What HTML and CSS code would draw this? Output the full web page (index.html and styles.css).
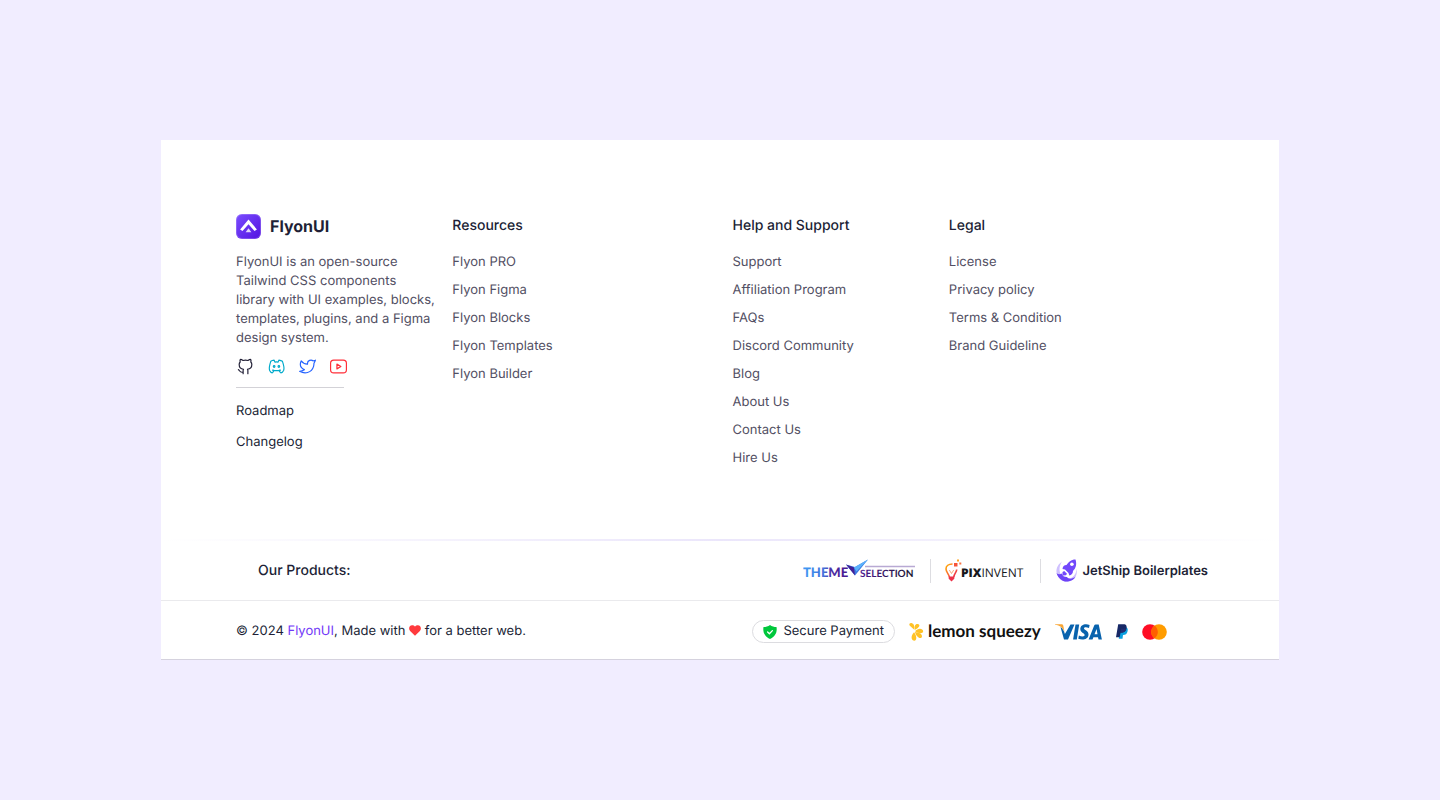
FILE: index.html
```html
<!DOCTYPE html>
<html lang="en">
<head>
<meta charset="utf-8">
<meta name="viewport" content="width=device-width, initial-scale=1">
<title>FlyonUI</title>
<link rel="stylesheet" href="styles.css">
</head>
<body>
<footer class="footer">
  <div class="footer-main">
    <section class="about">
      <a class="brand" href="#">
        <svg class="brand-mark" viewBox="0 0 25 25" aria-hidden="true">
          <defs><linearGradient id="bg" x1="0" y1="0" x2="1" y2="1"><stop offset="0" stop-color="#7a4dff"/><stop offset="1" stop-color="#5312e0"/></linearGradient></defs>
          <rect width="25" height="25" rx="6" fill="url(#bg)"/>
          <rect x=".5" y=".5" width="24" height="24" rx="5.5" fill="none" stroke="#fff" stroke-opacity=".2"/>
          <path d="M12.500 5.400 20.900 15.400 18.500 17 12.500 10.200 6.500 17 4.100 15.400Z" fill="#fff"/>
          <path d="M12.500 14.300 15.400 18.200H9.600Z" fill="#fff" fill-opacity=".8"/>
        </svg>
        <span>FlyonUI</span>
      </a>
      <p class="about-text">FlyonUI is an open-source Tailwind CSS components library with UI examples, blocks, templates, plugins, and a Figma design system.</p>
      <div class="social">
        <a class="github" href="#" aria-label="GitHub"><svg class="icon" viewBox="0 0 24 24"><path d="M9 19c-4.300 1.400-4.300-2.500-6-3m12 5v-3.500c0-1 .1-1.400-.5-2 2.800-.3 5.500-1.400 5.500-6a4.600 4.600 0 0 0-1.300-3.200 4.200 4.200 0 0 0-.1-3.200s-1.100-.3-3.500 1.300a12.300 12.300 0 0 0-6.200 0C6.500 2.800 5.400 3.100 5.400 3.100a4.200 4.200 0 0 0-.1 3.200A4.600 4.600 0 0 0 4 9.500c0 4.600 2.700 5.700 5.500 6-.6.6-.6 1.200-.5 2V21"/></svg></a>
        <a class="discord" href="#" aria-label="Discord"><svg class="icon" viewBox="0 0 24 24"><path d="M8 12a1 1 0 1 0 2 0 1 1 0 0 0-2 0m6 0a1 1 0 1 0 2 0 1 1 0 0 0-2 0M8.500 17c0 1-1.356 3-1.832 3-1.429 0-2.698-1.667-3.333-3-.635-1.667-.476-5.833 1.428-11.500C6.151 4.485 7.545 4.160 9 4l1 2.500q2-.5 4 0L15 4c1.500.160 3.043.485 4.500 1.500 2 5.667 2.167 9.833 1.500 11.500-.667 1.333-2 3-3.500 3-.5 0-2-2-2-3M7 16.500c3.500 1 6.500 1 10 0"/></svg></a>
        <a class="twitter" href="#" aria-label="Twitter"><svg class="icon" viewBox="0 0 24 24"><path d="M22 4.010c-1 .49-1.980.689-3 .99-1.121-1.265-2.783-1.335-4.380-.737S11.977 6.323 12 8v1c-3.245.083-6.135-1.395-8-4 0 0-4.182 7.433 4 11-1.872 1.247-3.739 2.088-6 2 3.308 1.803 6.913 2.423 10.034 1.517 3.580-1.040 6.522-3.723 7.651-7.742a13.840 13.840 0 0 0 .497-3.753C20.180 7.773 21.692 5.250 22 4.009z"/></svg></a>
        <a class="youtube" href="#" aria-label="YouTube"><svg class="icon" viewBox="0 0 24 24"><path d="M2 8a4 4 0 0 1 4-4h12a4 4 0 0 1 4 4v8a4 4 0 0 1-4 4H6a4 4 0 0 1-4-4zM10 9l5 3-5 3z"/></svg></a>
      </div>
      <nav class="quick" aria-label="Updates">
        <a href="#">Roadmap</a>
        <a href="#">Changelog</a>
      </nav>
    </section>
    <nav class="column" aria-labelledby="h-resources">
      <h2 id="h-resources">Resources</h2>
      <ul>
        <li><a href="#">Flyon PRO</a></li>
        <li><a href="#">Flyon Figma</a></li>
        <li><a href="#">Flyon Blocks</a></li>
        <li><a href="#">Flyon Templates</a></li>
        <li><a href="#">Flyon Builder</a></li>
      </ul>
    </nav>
    <nav class="column" aria-labelledby="h-help">
      <h2 id="h-help">Help and Support</h2>
      <ul>
        <li><a href="#">Support</a></li>
        <li><a href="#">Affiliation Program</a></li>
        <li><a href="#">FAQs</a></li>
        <li><a href="#">Discord Community</a></li>
        <li><a href="#">Blog</a></li>
        <li><a href="#">About Us</a></li>
        <li><a href="#">Contact Us</a></li>
        <li><a href="#">Hire Us</a></li>
      </ul>
    </nav>
    <nav class="column" aria-labelledby="h-legal">
      <h2 id="h-legal">Legal</h2>
      <ul>
        <li><a href="#">License</a></li>
        <li><a href="#">Privacy policy</a></li>
        <li><a href="#">Terms &amp; Condition</a></li>
        <li><a href="#">Brand Guideline</a></li>
      </ul>
    </nav>
  </div>

  <div class="fade-line"></div>
  <div class="products">
    <h2>Our Products:</h2>
    <div class="product-list">
      <a href="#" aria-label="ThemeSelection">
        <svg class="theme-logo" viewBox="0 0 113 24">
          <defs>
            <linearGradient id="th" x1="0" x2="1"><stop offset="0" stop-color="#3f9cf5"/><stop offset=".45" stop-color="#4473dc"/><stop offset=".62" stop-color="#4b2fa4"/><stop offset="1" stop-color="#49168f"/></linearGradient>
            <linearGradient id="se" x1="0" x2="1"><stop offset="0" stop-color="#4d1a91"/><stop offset="1" stop-color="#1c1231"/></linearGradient>
          </defs>
          <text class="theme-word" x="0" y="18" fill="url(#th)">THEME</text>
          <path d="M62 7.500H112" stroke="#b8a9d3" stroke-width="1.500"/>
          <path d="M43 5.500 52 8 65 .5 52 16.500Z" fill="#3a78e2"/>
          <path d="M43 5.500 51 8.500 52 16.500Z" fill="#432096"/>
          <path d="M51 8.500 65 .5 53.500 12.500Z" fill="#5bb2fc"/>
          <text class="selection-word" x="57" y="18" fill="url(#se)">SELECTION</text>
        </svg>
      </a>
      <a href="#" aria-label="Pixinvent">
        <svg class="pix-logo" viewBox="0 0 81 24">
          <defs><linearGradient id="bu" x1="0" y1="0" x2="1" y2="1"><stop offset="0" stop-color="#ffb000"/><stop offset=".5" stop-color="#fb6b32"/><stop offset="1" stop-color="#e9204f"/></linearGradient></defs>
          <path d="M7.500 5C3.500 5 1 7 1 10c0 3 2.600 4.500 3.400 8M11.700 10.500C11.700 13 9.400 14.500 8.700 18" fill="none" stroke="url(#bu)" stroke-width="1.600"/>
          <path d="M4.300 11 6.500 14.500 8.700 11" fill="none" stroke="#f98a4a" stroke-width=".7"/>
          <path d="M3.700 17.500H9.300V19.800L6.500 22.500 3.700 19.800Z" fill="#ec3148"/>
          <path d="M9 4H12.500V7.500H9z" fill="#f65438"/><path d="M12 .5h2v2h-2z" fill="#ffa51f"/><path d="M14.300 3.500h2v2h-2z" fill="#fa7343"/>
          <text class="pix-word" x="16" y="18"><tspan class="strong">PIX</tspan>INVENT</text>
        </svg>
      </a>
      <a class="jetship" href="#">
        <svg class="jet-mark" viewBox="0 0 24 24" aria-hidden="true">
          <path d="M7 2.500C2 6 .5 11 2 15 4 20.500 8 23 12.500 22.800 19.500 22 23 16.500 21.500 9.500 21.500 15 18 19.500 13 19.500 6 19.500 1.500 11 7 2.500Z" fill="#cfc0ff"/>
          <path d="M1.500 14C3.500 20 8 23.200 13 22.500 17 22 19.500 20 20.500 17.500 18 20 13.500 20.500 12 18 9 18 7.300 17 7 14.500 5 15.500 3 15.500 1.500 14Z" fill="#6d43f7"/>
          <path d="M20.500.5C16 .5 13.500 3 11.500 6 9 6 7.800 7.500 7.500 10L10 10.500 13.500 14 14.300 16.500C16.500 16 18 14.500 18 12 21 9 22 5.500 20.500.5ZM9.200 12 7.500 13 7.500 16.500 11 16.300 12 14.800Z" fill="#7248fb"/>
          <circle cx="16.900" cy="5.300" r="1.800" fill="#fff"/>
        </svg>
        <span>JetShip Boilerplates</span>
      </a>
    </div>
  </div>

  <div class="bottom">
    <p class="copyright">© 2024 <a href="#">FlyonUI</a>, Made with <svg class="heart" viewBox="0 0 12 11" role="img" aria-label="love"><path d="M6 10.700 1.100 5.900C-.7 4 0 .5 3.100.3 4.500.2 5.500.9 6 1.700 6.500.9 7.500.2 8.900.3 12 .5 12.700 4 10.900 5.900Z"/></svg> for a better web.</p>
    <div class="payments">
      <span class="secure">
        <svg class="shield" viewBox="0 0 14 14" aria-hidden="true"><path d="M7 0c2 1.500 4 2 6.500 2C14.500 7.500 12 12 7 14 2 12-.5 7.500.5 2 3 2 5 1.500 7 0Z" fill="#00c73c"/><path d="m4.600 7 1.800 1.800 3-3.200" fill="none" stroke="#fff" stroke-width="1.300" stroke-linecap="round" stroke-linejoin="round"/></svg>
        Secure Payment
      </span>
      <svg class="lemon-logo" viewBox="0 0 132 20" role="img" aria-label="lemon squeezy">
        <g fill="#ffc226">
          <path d="M5 7.500 .6 3.600C-.4 2 1.200.6 3 1.300 5.200 2.200 5.600 4 5 7.500Z"/>
          <path d="M5.700 8C4.900 4.300 6.400 1.500 9 2.100 11.800 3.100 10.200 5.900 5.700 8Z"/>
          <path d="M6 9.300C8.800 5.600 13.900 5.900 14.200 9.300 14 11.900 9.800 11.700 6 9.300Z"/>
          <path d="M5.900 10C10 10.300 13.900 12.200 12.800 15.200 10.700 17.700 7.300 14.500 5.900 10Z"/>
          <path d="M5.100 10.300C7.400 13.300 8.400 17.800 5.600 18.700 2.300 18.800 1.100 14.300 5.100 10.300Z"/>
        </g>
        <text class="lemon-word" x="19" y="15">lemon squeezy</text>
      </svg>
      <svg class="visa-logo" viewBox="0 0 47 16" role="img" aria-label="Visa">
        <path d="M0 .3H6.500c1 0 1.600.5 1.800 1.500L9.500 8C8 4 5 1.300 0 .7Z" fill="#f9a533"/>
        <g fill="#0862ad"><path d="M15.500.5H19.500L13 15.500H9L5.500 3C7.500 4.500 9.200 7 9.900 9.900Z"/><path d="M20.500.5H24.200L21.800 15.500H18.100Z"/><path d="M34.600.9 34 4.100C31.500 3 29 3 29 4.600 29 6.200 33.500 6.600 33.500 10.500 33.500 15.500 27.500 16.500 23.300 14.800L23.900 11.400C26.500 12.800 29.700 12.800 29.700 11 29.700 9.200 25.300 8.800 25.300 5 25.300.5 30.500-.7 34.600.9Z"/><path fill-rule="evenodd" d="M40.600.5H43.700L46.900 15.500H43.500L43 13.200H38.400L37.500 15.500H33.600L39.200 1.500C39.400.9 39.900.5 40.600.5ZM39.500 10.300H42.500L41.600 5Z"/></g>
      </svg>
      <svg class="paypal-logo" viewBox="0 0 12 15" role="img" aria-label="PayPal">
        <path d="M4 3H10C12 4 12 6 11.500 7.500 11 10 9.500 11 7 11L6.500 14.800H2.800Z" fill="#0aa0df"/>
        <path d="M2.200.2H7.500C10.500.2 11 2.200 10.500 4.500 10 7.500 8 8.700 4.600 8.700L3.600 13.200H0Z" fill="#172866"/>
        <path d="M5 4.700H10.300C9.600 7.500 8 8.700 4.600 8.700Z" fill="#212d72"/>
      </svg>
      <svg class="master-logo" viewBox="0 0 25 16" role="img" aria-label="Mastercard"><circle cx="8" cy="8" r="7.800" fill="#ff0d25"/><circle cx="17" cy="8" r="7.800" fill="#ff9c00"/><path d="M12.500 1.600a7.800 7.800 0 0 1 0 12.800 7.800 7.800 0 0 1 0-12.800Z" fill="#ff5f00"/></svg>
    </div>
  </div>
</footer>
</body>
</html>
```
FILE: styles.css
```css
* { box-sizing: border-box; }

body {
  margin: 0;
  min-height: 100vh;
  display: flex;
  align-items: center;
  padding: 24px 161px;
  background: #f1edff;
  color: #211f36;
  font-family: Inter, "Liberation Sans", sans-serif;
  font-size: 13px;
  line-height: 19px;
  text-rendering: geometricPrecision;
}

a { color: inherit; text-decoration: none; }
svg { display: block; }
h2 { margin: 0; font-size: 14px; font-weight: 500; line-height: 22px; }
p { margin: 0; }

.footer {
  flex: 1;
  background: #fff;
  border-bottom: 1px solid #d5d2de;
}

.footer-main {
  display: grid;
  grid-template-columns: 3fr 4fr 3fr 4fr;
  gap: 25px;
  padding: 74px 75px 71px;
}

.brand {
  display: flex;
  align-items: center;
  gap: 9px;
  font-size: 16px;
  font-weight: 700;
  line-height: 25px;
}
.brand-mark { width: 25px; height: 25px; }

.about-text { margin: 14px -10px 0 0; color: #524f63; }

.social { display: flex; gap: 12px; margin-top: 9px; }
.icon {
  width: 19px;
  height: 19px;
  fill: none;
  stroke: currentColor;
  stroke-width: 1.5;
  stroke-linecap: round;
  stroke-linejoin: round;
}
.github { color: #211f36; }
.discord { color: #00aacb; }
.twitter { color: #2563ff; }
.youtube { color: #ff2e38; }

.quick {
  display: flex;
  flex-direction: column;
  gap: 12px;
  padding-top: 15px;
  margin-top: 11px;
  background: linear-gradient(#d3d2d7, #d3d2d7) no-repeat 0 0 / 108px 1px;
}

.column { padding-top: 1px; color: #524f63; }
.column h2 { color: #211f36; }
.column ul {
  display: flex;
  flex-direction: column;
  gap: 9px;
  margin: 16px 0 0;
  padding: 0;
  list-style: none;
}

.fade-line { height: 2px; background: linear-gradient(90deg, #fff, #ebe6fb 50%, #fff); }

.products {
  display: flex;
  align-items: center;
  justify-content: space-between;
  padding: 18px 71px 17px 97px;
  border-bottom: 1px solid #eaeaed;
}
.product-list { display: flex; align-items: center; }
.product-list > a + a {
  margin-left: 14px;
  padding-left: 14px;
  border-left: 1px solid #dddde1;
}
.theme-logo { width: 113px; height: 24px; }
.theme-word { font: 900 13px Lato, sans-serif; }
.selection-word { font: 700 10px Lato, sans-serif; }
.pix-logo { width: 81px; height: 24px; }
.pix-word { font: 400 12px "Open Sans", sans-serif; fill: #17171c; }
.pix-word .strong { font-weight: 800; }
.jetship { display: flex; align-items: center; gap: 3px; font-weight: 600; }
.jet-mark { width: 24px; height: 24px; }

.bottom {
  display: flex;
  align-items: center;
  justify-content: space-between;
  padding: 19px 112px 16px 75px;
}
.copyright a { color: #7139f7; }
.heart { display: inline-block; width: 12px; height: 11px; vertical-align: -1px; fill: #ff3a3d; }

.payments { display: flex; align-items: center; gap: 14px; }
.secure {
  display: flex;
  align-items: center;
  gap: 6px;
  padding: 1px 10px;
  border: 1px solid #dcdce0;
  border-radius: 12px;
}
.shield { width: 14px; height: 14px; }
.lemon-logo { width: 132px; height: 20px; overflow: visible; }
.lemon-word { font: 700 17px Lato, sans-serif; fill: #111; }
.visa-logo { width: 47px; height: 16px; }
.paypal-logo { width: 12px; height: 15px; }
.master-logo { width: 25px; height: 16px; }
```
